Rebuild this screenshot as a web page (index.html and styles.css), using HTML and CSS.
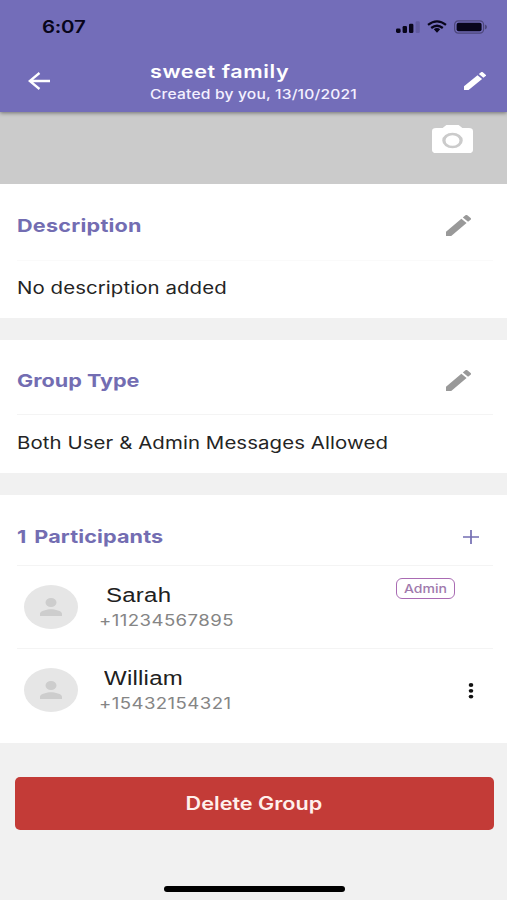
FILE: index.html
```html
<!DOCTYPE html>
<html lang="en">
<head>
<meta charset="utf-8">
<meta name="viewport" content="width=device-width, initial-scale=1">
<title>sweet family</title>
<link rel="stylesheet" href="styles.css">
</head>
<body>
<svg class="defs" width="0" height="0">
  <symbol id="pencil" viewBox="3 3 18 18" preserveAspectRatio="none"><path d="M3 17.25V21h3.75L17.81 9.94l-3.75-3.75L3 17.25zM20.71 7.04a1 1 0 0 0 0-1.41l-2.34-2.34a1 1 0 0 0-1.41 0l-1.83 1.83 3.75 3.75 1.83-1.83z"/></symbol>
  <symbol id="person" viewBox="4 4 16 16" preserveAspectRatio="none"><path d="M12 12a4 4 0 1 0 0-8 4 4 0 0 0 0 8zm0 2c-2.67 0-8 1.34-8 4v2h16v-2c0-2.66-5.33-4-8-4z"/></symbol>
</svg>
<header class="header">
  <div class="status">
    <span class="text time">6:07</span>
    <div class="status-icons">
      <svg class="signal" viewBox="0 0 24 12"><rect x="0" y="7.5" width="4.6" height="4.5" rx="1.4"/><rect x="6.6" y="5" width="4.4" height="7" rx="1.3"/><rect x="13" y="2.7" width="4.4" height="9.3" rx="1.3"/><rect class="faint" x="19.6" y="0.3" width="4.2" height="11.7" rx="1.3"/></svg>
      <svg class="wifi" viewBox="0 0 20 13" fill="none" stroke="#08051a" stroke-width="2.3"><path d="M1 4.9Q10-2.2 19 4.9"/><path d="M4.2 8Q10 3.4 15.8 8"/><path d="M6.8 9.2Q10 7 13.2 9.2L10 12.7z" fill="#08051a" stroke="none"/></svg>
      <svg class="battery" viewBox="0 0 33 14"><rect x="0.6" y="0.9" width="29" height="12.2" rx="3.8" fill="none" stroke="#4d477b" stroke-width="1.2"/><rect x="2.6" y="2.7" width="25" height="8.6" rx="2"/><path class="nub" d="M31 4.5q2 .7 2 2.5t-2 2.5z"/></svg>
    </div>
  </div>
  <div class="bar">
    <svg class="back" viewBox="0 0 22 18" fill="none" stroke="#fff" stroke-width="2.3"><path d="M22 9H2M11.5 1L1.7 9l9.8 8"/></svg>
    <div class="titles">
      <h1 class="text title">sweet family</h1>
      <p class="text subtitle">Created by you, 13/10/2021</p>
    </div>
    <svg class="edit-title"><use href="#pencil"/></svg>
  </div>
</header>
<div class="cover">
  <svg class="camera" viewBox="2 2 20 18" preserveAspectRatio="none"><path fill-rule="evenodd" d="M9 2 7.17 4H4a2 2 0 0 0-2 2v12a2 2 0 0 0 2 2h16a2 2 0 0 0 2-2V6a2 2 0 0 0-2-2h-3.17L15 2H9zm3 15a5 5 0 1 1 0-10 5 5 0 0 1 0 10zm0-1.6a3.4 3.4 0 1 0 0-6.8 3.4 3.4 0 0 0 0 6.8z"/></svg>
</div>
<main>
  <section class="card">
    <div class="card-head first"><h2 class="text">Description</h2><svg class="edit"><use href="#pencil"/></svg></div>
    <p class="card-body"><span class="text">No description added</span></p>
  </section>
  <section class="card group-type">
    <div class="card-head"><h2 class="text tight">Group Type</h2><svg class="edit"><use href="#pencil"/></svg></div>
    <p class="card-body"><span class="text">Both User &amp; Admin Messages Allowed</span></p>
  </section>
  <section class="card people">
    <div class="card-head people-head"><h2 class="text count">1 Participants</h2><svg class="plus" viewBox="0 0 16 14"><path d="M0 7h16M8 0v14"/></svg></div>
    <div class="person">
      <div class="avatar"><svg><use href="#person"/></svg></div>
      <div class="who"><span class="text name sarah">Sarah</span><span class="text phone">+11234567895</span></div>
      <span class="badge"><span class="text">Admin</span></span>
    </div>
    <div class="person">
      <div class="avatar"><svg><use href="#person"/></svg></div>
      <div class="who"><span class="text name william">William</span><span class="text phone">+15432154321</span></div>
      <svg class="more" viewBox="0 0 6 16"><ellipse cx="3" cy="2" rx="2.3" ry="1.9"/><ellipse cx="3" cy="7.8" rx="2.3" ry="1.9"/><ellipse cx="3" cy="13.6" rx="2.3" ry="1.9"/></svg>
    </div>
  </section>
  <button class="delete"><span class="text">Delete Group</span></button>
</main>
<div class="home"></div>
</body>
</html>
```
FILE: styles.css
```css
* { box-sizing: border-box; margin: 0; padding: 0; }
body { width: 507px; height: 900px; overflow: hidden; background: #f1f1f1; font-family: Inter, "Liberation Sans", sans-serif; display: flex; flex-direction: column; }
svg { display: block; flex: none; }
.defs { position: absolute; }
.text { display: block; width: max-content; white-space: nowrap; transform: scaleX(1.2); transform-origin: left center; }

.header { height: 112px; flex: none; background: #736db9; box-shadow: 0 1px 4px rgba(0,0,0,.45); position: relative; }
.status { height: 53px; padding: 0 20px 0 42px; display: flex; align-items: center; justify-content: space-between; }
.time { font-size: 17px; font-weight: 600; color: #08051a; line-height: 20px; letter-spacing: -.2px; }
.status-icons { display: flex; align-items: center; gap: 7px; fill: #08051a; }
.signal { width: 24px; height: 12px; }
.faint { fill: #625ca1; }
.wifi { width: 20px; height: 13px; }
.battery { width: 33px; height: 14px; }
.nub { fill: #4d477b; }
.bar { height: 59px; padding: 0 21px 0 28px; display: flex; align-items: flex-start; color: #fff; }
.back { width: 22px; height: 18px; margin-top: 19px; }
.titles { margin-left: 100px; padding-top: 7px; flex: 1; }
.title { font-size: 18px; font-weight: 600; line-height: 24px; letter-spacing: .48px; }
.subtitle { font-size: 13px; font-weight: 500; line-height: 20px; letter-spacing: .15px; color: #f3f0ff; }
.edit-title { width: 22px; height: 18px; margin-top: 19px; fill: #fff; }

.cover { height: 72px; flex: none; background: #cbcbcb; display: flex; justify-content: flex-end; padding: 13px 34px 0 0; }
.camera { width: 41px; height: 28px; fill: #fff; }

.card { background: #fff; height: 134px; margin-bottom: 22px; padding: 0 14px 0 17px; }
.card-head { height: 75px; border-bottom: 1px solid #f4f4f4; display: flex; align-items: center; justify-content: space-between; padding: 7px 22px 0 0; }
.card-head.first { height: 77px; border-color: #fafafa; }
h2 { font-size: 18px; font-weight: 650; line-height: 24px; letter-spacing: .2px; margin-left: .4px; color: #736db2; }
.tight { letter-spacing: 0; }
.count { letter-spacing: .1px; word-spacing: 2.2px; }
.edit { width: 25px; height: 21px; fill: #999; }
.card-body { color: #242424; font-size: 17px; line-height: 24px; padding: 15px 0 0 .4px; letter-spacing: .07px; }
.group-type { height: 133px; }
.group-type .card-body { padding-top: 16px; }
.people { height: 248px; margin-bottom: 34px; }
.people-head { height: 71px; padding: 13px 14px 0 0; }
.plus { width: 16px; height: 14px; stroke: #736db2; stroke-width: 1.7; }
.person { height: 83px; display: flex; align-items: flex-start; padding-left: 7px; border-bottom: 1px solid #f4f4f4; }
.person:last-child { border: 0; }
.avatar { width: 54px; height: 44px; margin-top: 19px; border-radius: 50%; background: #e6e6e6; display: flex; align-items: center; justify-content: center; }
.avatar svg { width: 22px; height: 18px; fill: #cdcdcd; }
.who { flex: 1; padding: 16px 0 0 22px; }
.name { font-family: "Liberation Sans", Arial, sans-serif; font-size: 20px; line-height: 26px; letter-spacing: .2px; color: #202020; }
.sarah { margin-left: 6px; }
.william { margin-left: 4px; }
.phone { font-size: 15.5px; line-height: 24px; letter-spacing: .36px; margin: .5px 0 0 -.7px; color: #858585; }
.badge { width: 59px; height: 21px; margin: 12px 38px 0 0; padding-left: 7px; border: 1.5px solid #a96bb3; border-radius: 6px; color: #a07aad; font-size: 12px; font-weight: 500; line-height: 19px; }
.badge .text { transform: scaleX(1.17); }
.more { width: 6px; height: 16px; margin: 34px 19px 0 0; fill: #111; }
.delete { display: flex; width: 479px; height: 53px; margin-left: 15px; padding-right: 2px; border: 0; border-radius: 5px; background: #c33b37; align-items: center; justify-content: center; color: #fff0ec; font: 600 18px/24px Inter, sans-serif; }
.delete .text { transform-origin: center; }
.home { width: 181px; height: 6px; margin: auto auto 8px 164px; border-radius: 3px; background: #000; }
```
